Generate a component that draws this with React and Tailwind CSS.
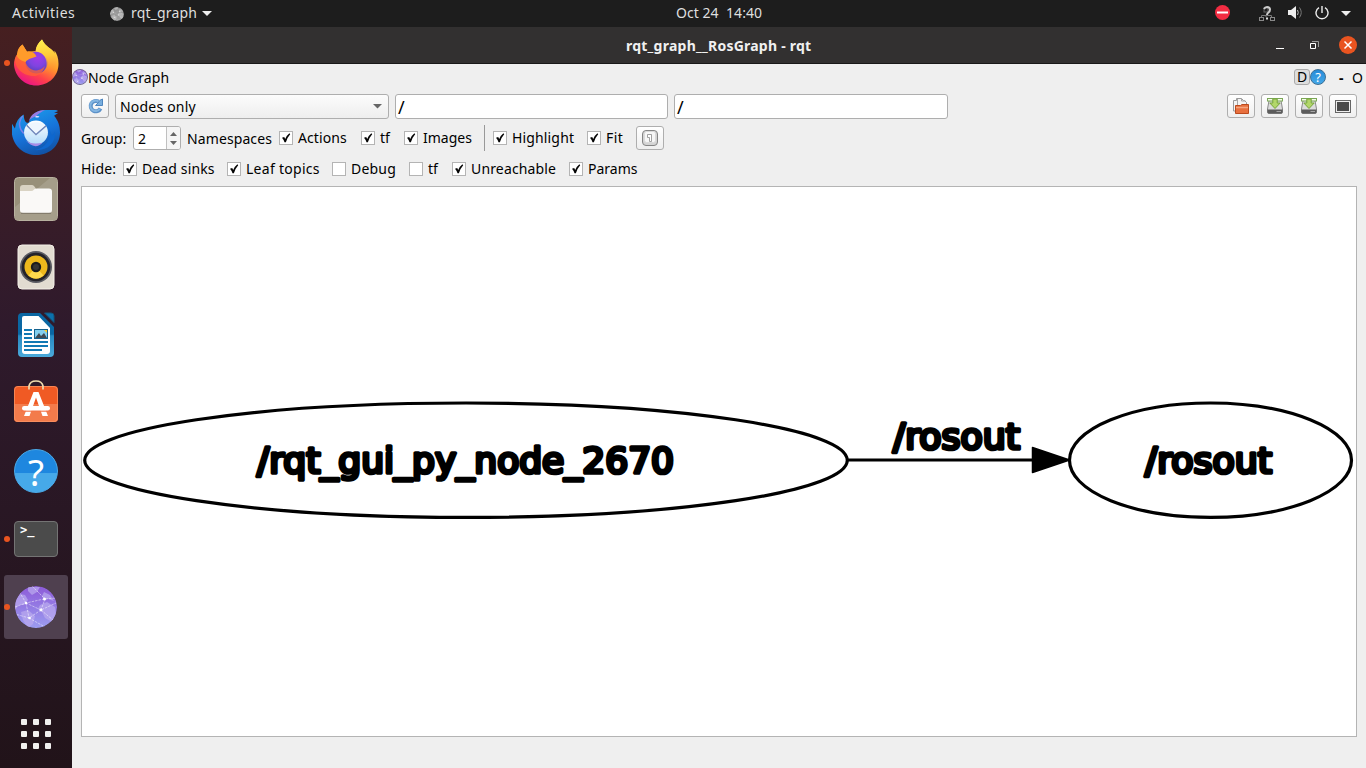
import React from "react";

function Label({ children, className = "" }) {
  return <span className={"block shrink-0 whitespace-pre leading-5 " + className}>{children}</span>;
}

function Check({ on = true, gap = "ml-[13px]" }) {
  return (
    <span className={"mr-[5px] flex h-3.5 w-3.5 shrink-0 items-center justify-center border border-[#b4b4b4] bg-white " + gap}>
      {on && (
        <svg width="12" height="12" viewBox="0 0 12 12">
          <path d="M2 5.8 4.2 5 5.2 7Q6.6 3.5 9.4 1.3L10.2 2.2Q7.2 5.5 5.9 10.2H4.5Q3.7 7.7 2 5.8Z" fill="#050505" />
        </svg>
      )}
    </span>
  );
}

function ToolButton({ children, className = "" }) {
  return (
    <span className={"flex h-6 w-7 shrink-0 items-center justify-center rounded-[3px] border border-[#aeaeae] bg-linear-to-b from-white to-[#efefef] " + className}>
      {children}
    </span>
  );
}

function Globe({ size, gray = false, rim = false }) {
  const id = "globe" + size;
  return (
    <svg width={size} height={size} viewBox="0 0 42 42">
      <defs>
        <linearGradient id={id} x1="0" y1="0" x2="0" y2="1">
          <stop offset="0" stopColor={gray ? "#8f8f8f" : "#8d5bd8"} />
          <stop offset="1" stopColor={gray ? "#a0a0a0" : "#9c9df0"} />
        </linearGradient>
        <clipPath id={id + "c"}><circle cx="21" cy="21" r="21" /></clipPath>
      </defs>
      <g clipPath={"url(#" + id + "c)"}>
        <circle cx="21" cy="21" r="21" fill={"url(#" + id + ")"} />
        <g fill={gray ? "#bdbdbd" : "#b9a8ee"} opacity="0.75">
          <path d="M0 15 5 8 10 9 13 14 9 19 4 19 0 24Z" />
          <path d="M13 1h12l-3 5-5 3-4-4Z" />
          <path d="M6 26l7-2 7 6-2 8-5 4-5-8Z" />
          <path d="M25 19l7-3 8 5 1 8-4 7-7-4-3-6-4-3Z" />
          <path d="M29 6l6 3 4 6-6-2-4 1-2-4Z" />
        </g>
        <path d="M0 21 11 17 29 13 41 12M11 17 26 24 41 17M26 24 14 32 0 28M14 32 30 41M17 0 30 13 26 24M11 17 14 32M11 17 5 7M26 24 38 34" stroke="white" strokeWidth="0.8" strokeDasharray="2.5 1" opacity="0.6" fill="none" />
        <g fill="white"><circle cx="11" cy="17" r="1.3" /><circle cx="29.5" cy="13" r="1.5" /><circle cx="26" cy="24" r="1.4" /><circle cx="14.5" cy="32" r="1.3" /></g>
        {rim && <circle cx="21" cy="21" r="20" fill="none" stroke="#777080" strokeWidth="2.5" />}
      </g>
    </svg>
  );
}

function Firefox() {
  return (
    <svg width="46" height="48" viewBox="0 0 46 48">
      <defs>
        <linearGradient id="ffb" x1="0.8" y1="0.1" x2="0.3" y2="1">
          <stop offset="0" stopColor="#ffe24a" /><stop offset="0.4" stopColor="#ff9a2a" /><stop offset="0.72" stopColor="#ff3f4b" /><stop offset="1" stopColor="#e8128a" />
        </linearGradient>
        <radialGradient id="ffp" cx="0.55" cy="0.3" r="0.75">
          <stop offset="0" stopColor="#a03bea" /><stop offset="0.5" stopColor="#8044e0" /><stop offset="1" stopColor="#4b3fb4" />
        </radialGradient>
        <linearGradient id="fff" x1="0" y1="0" x2="0.1" y2="1"><stop offset="0" stopColor="#fff44f" /><stop offset="0.5" stopColor="#ffc93a" /><stop offset="1" stopColor="#ff7a36" stopOpacity="0" /></linearGradient>
      </defs>
      <path d="M29 0.5C25 4 23 8 22.5 12L14 13 9.5 5.5C6 8 5 11 5 14 2 18 0.8 22 1 26 2 38 12 46.5 23 46.5 36 46.5 45.5 37 45.5 25 45.5 19 44 15 41.5 11.5V16C40 11 36 9 33 6 31 4 30 2 29 .5Z" fill="url(#ffb)" />
      <circle cx="23.5" cy="23.5" r="11" fill="url(#ffp)" />
      <path d="M29 0.5C25 4 22.5 9 23 12.500C29 13 33.500 18 33.500 24 33.500 31 29 35 23 36 33 38.500 42 33 43.500 24 44.500 17 42 13 38 10 33 7 30 4 29 .5Z" fill="url(#fff)" />
      <path d="M2 20Q3 16 5 14C6 18 9 20 12 21 13 27 17 31 23 31.500 28 31 30 29 32 27 30 34 25 37.500 19 37 9 36 2 29 2 20Z" fill="#ff6335" opacity="0.75" />
      <path d="M9.500 5.500 14 12.500C19 11.500 22 14 23.500 17.500 20 19 15 19.500 12.500 23 9 22 5 20 4 17 4 11 6 8 9.500 5.500Z" fill="#ff9b2b" />
    </svg>
  );
}

function Thunderbird() {
  return (
    <svg width="48" height="46" viewBox="0 1 49 47" preserveAspectRatio="none">
      <defs>
        <linearGradient id="tb" x1="0.2" y1="0" x2="0.6" y2="1"><stop offset="0" stopColor="#1c9ceb" /><stop offset="0.55" stopColor="#1672d9" /><stop offset="1" stopColor="#1152a5" /></linearGradient>
        <linearGradient id="tw" x1="0" y1="0" x2="0" y2="1"><stop offset="0" stopColor="#fff" /><stop offset="1" stopColor="#b3dcfa" /></linearGradient>
      </defs>
      <path d="M17 15C20 6 26 2 34 2h10q2 0 3 1l-4 2h4l-4 3c4 5 6 10 6 17 0 13-10 23-24 23C12 48 2 39 0 27V16l3 5Q4 11 12 6.500C12 12 14 16 17 15Z" fill="url(#tb)" />
      <path d="M17 14c2-8 9-12 17-12-7 3-8 6-13 8-2 1-3 2-4 4Z" fill="#977ce5" />
      <path d="M11 8C6 14 7 21 12 26" fill="none" stroke="#7a80e8" strokeWidth="1.500" />
      <circle cx="24.500" cy="25" r="12.200" fill="url(#tw)" />
      <path d="m15 17.500 9.500 9.500L35 18" fill="none" stroke="#7187bb" strokeWidth="1.600" />
      <path d="M16 17.500q8-6 18 0L24.500 26Z" fill="#eef6fe" />
      <path d="M14 33Q20 38 31 35.500 28 39 24 39 18 38 14 33Z" fill="#a78de6" />
      <path d="M38 22c2 11-4 19-15 21 13 1 22-7 21-19l-3 4Z" fill="#0e67ce" />
      <path d="m24 8 4 .3-1 1.500-3-.1Z" fill="#ddf" />
    </svg>
  );
}

function Files() {
  return (
    <svg width="44" height="44" viewBox="0 0 44 44">
      <rect x="0.5" y="0.5" width="43" height="43" rx="4" fill="#989079" stroke="#b8b2a0" />
      <path d="M1 30 36 1h4q3 0 3 3v36q0 3-3 3H4q-3 0-3-3Z" fill="#a59e8a" />
      <path d="M6 11q0-3 3-3h9q2 0 4 4l13 1v19H6Z" fill="#d9d3c3" />
      <path d="M6 14h11q2 0 3-1.500 1-1 3-1h12q3 0 3 3v18.500q0 3-3 3H9q-3 0-3-3Z" fill="#faf9f7" />
      <path d="M7 36.300h30" stroke="#7b7464" strokeWidth="1" />
    </svg>
  );
}

function Rhythmbox() {
  return (
    <svg width="38" height="46" viewBox="0 0 38 46">
      <rect x="1" y="1" width="36" height="44" rx="4" fill="#e2dcd1" stroke="#f4f0e8" />
      <circle cx="19" cy="23" r="16" fill="#5a5b62" /><circle cx="19" cy="23" r="14.300" fill="#242329" />
      <circle cx="19" cy="23" r="11.500" fill="#edb81c" /><path d="M11.500 31.500Q19 38 26.500 31.500L19 23Z" fill="#ffd94c" />
      <circle cx="19" cy="23" r="5.200" fill="#1b1b1c" /><circle cx="19" cy="23" r="3" fill="#343434" />
    </svg>
  );
}

function Writer() {
  return (
    <svg width="38" height="46" viewBox="0 0 38 46">
      <defs><linearGradient id="wr" x1="0" y1="0" x2="0" y2="1"><stop offset="0.48" stopColor="#0a67a3" /><stop offset="0.52" stopColor="#2789c1" /><stop offset="1" stopColor="#4baadb" /></linearGradient></defs>
      <path d="M5 1h18l14 14v26q0 4-4 4H5q-4 0-4-4V5q0-4 4-4Z" fill="url(#wr)" />
      <path d="M27.500 1H34q3 0 3 3v6.500Z" fill="#0b71ac" stroke="#12557c" />
      <path d="M7 4h14.500L33 16v23q0 3-3 3H8q-3 0-3-3V6q0-2 2-2Z" fill="#fff" />
      <path d="M7 18h8M7 22h8M7 26h8M7 30h24M7 34h24M7 38h18" stroke="#1279b4" strokeWidth="2" />
      <rect x="17.500" y="17.500" width="13" height="9" fill="#83cfee" stroke="#15618d" />
      <path d="m18 26 4-5 2 3 3-3 3 5Z" fill="#404952" /><path d="M27 18h3v3Z" fill="#ffca28" />
    </svg>
  );
}

function Software() {
  return (
    <svg width="46" height="46" viewBox="0 0 46 46">
      <rect x="1" y="8" width="44" height="36" rx="4" fill="#f05a24" />
      <path d="M1 26h44v14q0 4-4 4H5q-4 0-4-4Z" fill="#f37b4b" />
      <rect x="1.500" y="8.500" width="43" height="35" rx="3.500" fill="none" stroke="#f99768" strokeOpacity="0.7" />
      <path d="M16 11.500V8q1-5 7-5t7 5v3.500" fill="none" stroke="#efdcae" strokeWidth="1.700" />
      <path d="M20.500 14h5L35 38h-5.500L23 19.500 16.500 38H11Z" fill="white" />
      <path d="M8 33h30" stroke="#f37347" strokeWidth="1.500" />
      <rect x="9" y="28" width="28" height="4.500" rx="2.200" fill="white" />
    </svg>
  );
}

function HelpIcon({ size }) {
  return (
    <span className={size === 44
      ? "flex h-11 w-11 items-center justify-center rounded-full border border-[#4aaae9] bg-linear-to-b from-[#1e87df] from-54% to-[#46a9e9] to-56% font-['Noto_Sans',sans-serif] text-[37px] leading-none text-white"
      : "flex h-4 w-4 items-center justify-center rounded-full border border-[#3c6e94] bg-linear-to-b from-[#258bd9] to-[#45a8e7] font-['Noto_Sans',sans-serif] text-[13px] leading-none text-white"}>?</span>
  );
}

function DockItem({ children, running = false, active = false }) {
  return (
    <div className={"relative flex h-16 w-16 shrink-0 items-center justify-center rounded-[3px] " + (active ? "bg-[#4f404f]" : "")}>
      {running && <span className="absolute top-[29px] left-0 h-1.5 w-1.5 rounded-full bg-[#e95420]" />}
      {children}
    </div>
  );
}

function Dock() {
  return (
    <aside className="flex w-[72px] shrink-0 flex-col items-center gap-1 bg-linear-to-b from-[#461f20] via-[#2f1a2c] via-40% to-[#211319] pt-1">
      <DockItem running><Firefox /></DockItem>
      <DockItem><div className="mt-0.5"><Thunderbird /></div></DockItem>
      <DockItem><Files /></DockItem>
      <DockItem><Rhythmbox /></DockItem>
      <DockItem><Writer /></DockItem>
      <DockItem><div className="-mt-1"><Software /></div></DockItem>
      <DockItem><HelpIcon size={44} /></DockItem>
      <DockItem running>
        <span className="flex h-9 w-11 rounded-[4px] border border-[#747474] bg-[#4b4b4b] pt-0.5 pl-[5px] font-['DejaVu_Sans_Mono',monospace] text-[12px] leading-[12px] font-bold text-white">&gt;_</span>
      </DockItem>
      <DockItem running active><Globe size={42} /></DockItem>
      <div className="mt-auto mb-[19px] grid grid-cols-3 gap-1.5">
        {Array.from({ length: 9 }, (_, i) => <span key={i} className="h-1.5 w-1.5 rounded-[1px] bg-[#f1f0ef]" />)}
      </div>
    </aside>
  );
}

function TopBar() {
  return (
    <header className="flex h-[27px] shrink-0 items-center bg-[#1d1d1d] text-[14px] text-[#dfdfdf]">
      <Label className="-mt-px ml-3 w-[98px] tracking-[0.5px]">Activities</Label>
      <Globe size={14} gray />
      <Label className="-mt-px ml-[7px] w-[70px] tracking-[0.15px]">rqt_graph</Label>
      <svg width="10" height="6" className="ml-px"><path d="M0 0h10L5 5Z" fill="#eee" /></svg>
      <Label className="-mt-px ml-[464px] w-[540px] tracking-[0.05px]">{"Oct 24  14:40"}</Label>
      <svg width="15" height="15" viewBox="0 0 15 15" className="-mt-0.5 -ml-px"><circle cx="7.5" cy="7.5" r="7.5" fill="#f22c42" /><path d="M2 7.5h11" stroke="white" strokeWidth="2" /></svg>
      <svg width="18" height="16" viewBox="0 0 18 16" className="ml-7" fill="none">
        <path d="M8 9v2M3.5 11V9.5h10V11" stroke="#777" /><rect x="1.5" y="11.5" width="4" height="3" stroke="#888" /><rect x="12.5" y="11.5" width="4" height="3" stroke="#888" />
        <rect x="6" y="2" width="4" height="4" stroke="#666" />
        <path d="M6 3q1-2 3-2 3 0 3 2.5Q12 5.5 10.5 6.5 9 7.5 9 9" stroke="#ccc" strokeWidth="2" /><rect x="8" y="11.5" width="2" height="2" fill="#ddd" />
      </svg>
      <svg width="16" height="16" viewBox="0 0 16 16" className="-mt-px ml-[11px]" fill="none">
        <path d="M1 5h3l5-4v13l-5-4H1Z" fill="#eee" /><path d="M10.5 5q1.5 2.5 0 5" stroke="#bbb" /><path d="M12.5 2.5q3.5 5 0 10" stroke="#777" />
      </svg>
      <svg width="14" height="14" viewBox="0 0 14 14" className="-mt-0.5 ml-3" fill="none" stroke="#eee" strokeWidth="1.4"><path d="M7 0v7M4 1.6a6 6 0 1 0 6 0" /></svg>
      <svg width="10" height="6" className="ml-3"><path d="M0 0h10L5 5Z" fill="#eee" /></svg>
    </header>
  );
}

function TitleBar() {
  return (
    <div className="flex h-[37px] shrink-0 items-center border-b border-[#191818] bg-[#323030] text-[14px] font-bold text-[#f0f0f0]">
      <Label className="mt-0.5 ml-[554px] w-[648px] tracking-[0.24px]">rqt_graph__RosGraph - rqt</Label>
      <svg width="9" height="10" className="ml-[2px]"><path d="M0 8.5h8" stroke="white" /></svg>
      <svg width="9" height="9" viewBox="0 0 9 9" className="ml-[25px]" fill="none"><path d="M2 .5h6.5V6" stroke="#999" /><path d="M.5 2.5h5v5h-5Z" stroke="white" /></svg>
      <svg width="18" height="18" viewBox="0 0 18 18" className="ml-5"><circle cx="9" cy="9" r="9" fill="#e95420" /><path d="m5.5 5.500 7 7m0-7-7 7" stroke="white" strokeWidth="1.5" /></svg>
    </div>
  );
}

function SaveIcon() {
  return (
    <svg width="16" height="16" viewBox="0 0 16 16">
      <path d="M2 2.500h12L15.500 11v3q0 1.500-1.500 1.500H2Q.5 15.500.5 14v-3Z" fill="#dcdcdc" stroke="#8a8a8a" />
      <path d="M.5 11.500h15V14q0 1.500-1.500 1.500H2Q.5 15.500.5 14Z" fill="#5c5c5c" /><path d="M9.500 13.500H14" stroke="#a5a5a5" />
      <rect x=".5" y=".5" width="15" height="2.500" fill="#f5fbe9" stroke="#7ba757" />
      <path d="M5.800 1h4.400v4h3L8 10.500 2.800 5h3Z" fill="#b2d76a" stroke="#76a53b" />
    </svg>
  );
}

function Toolbar() {
  return (
    <div className="flex h-[25px] items-start pr-[9px] pl-[9px]">
      <ToolButton>
        <svg width="17" height="16" viewBox="0 0 17 16" fill="none"><path d="M13.500 10.500A5.200 5.200 0 1 1 11.500 3.600" stroke="#5b91c8" strokeWidth="4" /><path d="M12.800 10.700A5.200 5.200 0 1 1 11.500 3.600" stroke="#83b5e1" strokeWidth="2" /><path d="M15.500 1v6.500H8.500L11 5l2-2.800Z" fill="#78aede" stroke="#4f86bf" /></svg>
      </ToolButton>
      <div className="ml-1.5 flex h-[25px] w-[274px] items-center justify-between rounded-[3px] border border-[#aeaeae] bg-linear-to-b from-[#fcfcfc] to-[#eeeeee] pr-1.5 pl-1">
        <Label className="tracking-[0.2px]">Nodes only</Label>
        <svg width="9" height="5"><path d="M0 0h9L4.500 4.500Z" fill="#666" /></svg>
      </div>
      <div className="ml-1.5 flex h-[25px] w-[273px] items-center rounded-[3px] border border-[#aeaeae] bg-white pl-0.5"><Label className="text-[18px]">/</Label></div>
      <div className="ml-1.5 flex h-[25px] w-[274px] items-center rounded-[3px] border border-[#aeaeae] bg-white pl-0.5"><Label className="text-[18px]">/</Label></div>
      <div className="ml-auto flex gap-1.5">
        <ToolButton>
          <svg width="16" height="16" viewBox="0 0 16 16">
            <path d="M.5 13V2.500h3v-2h5l2 2h1l2 2V13Z" fill="#f4f4f4" stroke="#9a9a9a" />
            <path d="M4.500 10V1M8.500.5V3h4" fill="none" stroke="#a8a8a8" />
            <path d="M2.500 15.500V7.500h5l1.500-1h6.500v9Z" fill="#e8703e" stroke="#bb4a1e" />
            <path d="M3 9.500h12" stroke="#f6a57f" strokeWidth="1.500" />
          </svg>
        </ToolButton>
        <ToolButton><SaveIcon /></ToolButton>
        <ToolButton><SaveIcon /></ToolButton>
        <ToolButton><svg width="16" height="13"><rect x=".5" y=".5" width="15" height="12" fill="#eee" stroke="#666" /><rect x="2" y="2" width="12" height="9" fill="#4b4b4b" /></svg></ToolButton>
      </div>
    </div>
  );
}

function Graph() {
  return (
    <svg width="1274" height="549" viewBox="82 187 1274 549" className="block">
      <g fill="none" stroke="black" strokeWidth="3.2">
        <ellipse cx="466" cy="460.2" rx="381.3" ry="57.2" />
        <ellipse cx="1210.500" cy="460.2" rx="141" ry="57.2" />
        <path d="M848 460h186" />
      </g>
      <path d="M1032.500 447.500v25l37-12.500Z" stroke="black" strokeWidth="1.500" strokeLinejoin="round" />
      <g fontFamily="DejaVu Sans, sans-serif" fontSize="35.500" stroke="black" strokeWidth="3.700" strokeLinejoin="round">
        <text x="257" y="473.300" textLength="417" lengthAdjust="spacingAndGlyphs">/rqt_gui_py_node_2670</text>
        <text x="893" y="448.600" textLength="127" lengthAdjust="spacingAndGlyphs">/rosout</text>
        <text x="1145" y="473.300" textLength="127" lengthAdjust="spacingAndGlyphs">/rosout</text>
      </g>
    </svg>
  );
}

export default function App() {
  return (
    <div className="flex h-[768px] w-[1366px] flex-col overflow-hidden font-['Noto_Sans',sans-serif]">
      <TopBar />
      <div className="flex min-h-0 flex-1">
        <Dock />
        <main className="flex w-[1294px] flex-col bg-[#efefef] text-[14px] text-black">
          <TitleBar />
          <div className="flex h-[30px] shrink-0 items-start pt-[5px]">
            <Globe size={16} rim />
            <Label className="-mt-px tracking-[0.12px]">Node Graph</Label>
            <span className="ml-auto flex h-4 w-4 items-center justify-center rounded-[3px] border border-[#aaa] bg-[#dedede] leading-none">D</span>
            <HelpIcon size={16} />
            <Label className="-mt-px ml-[13px] w-[13px] font-bold">-</Label>
            <Label className="-mt-px w-[14px]">O</Label>
          </div>
          <Toolbar />
          <div className="flex h-[38px] shrink-0 items-center pl-[9px]">
            <Label className="mt-0.5 w-[52px]">Group:</Label>
            <div className="flex h-6 w-12 overflow-hidden rounded-[3px] border border-[#aeaeae] bg-white">
              <Label className="w-[33px] border-r border-[#c0c0c0] pt-0.5 pl-1">2</Label>
              <span className="flex flex-1 flex-col items-center justify-center gap-[5px] bg-[#f5f5f5]">
                <svg width="7" height="4"><path d="M0 4h7L3.500 0Z" fill="#666" /></svg>
                <svg width="7" height="4"><path d="M0 0h7L3.500 4Z" fill="#666" /></svg>
              </span>
            </div>
            <Label className="mt-0.5 ml-1.5 w-[86px] tracking-[0.1px]">Namespaces</Label>
            <Check gap="-mt-px ml-1.5" /><Label className="w-[50px] tracking-[0.1px]">Actions</Label>
            <Check gap="-mt-px ml-[13px]" /><Label className="w-3">tf</Label>
            <Check gap="-mt-px ml-3" /><Label className="w-[49px]">Images</Label>
            <span className="ml-3 h-[26px] w-px bg-[#999]" />
            <Check gap="-mt-px ml-2" /><Label className="w-[62px] tracking-[0.15px]">Highlight</Label>
            <Check gap="-mt-px ml-[13px]" /><Label className="w-[18px] tracking-[0.4px]">Fit</Label>
            <ToolButton className="ml-3">
              <svg width="16" height="16" viewBox="0 0 16 16" fill="none" stroke="#777"><rect x=".5" y=".5" width="15" height="15" rx="3.500" fill="#d4d4d4" stroke="#858585" /><rect x="2.500" y="1.500" width="11" height="11" rx="2" fill="#f7f7f7" stroke="#dadada" /><path d="M5.500 4.500h4v7h-2v-4h-2Z" fill="white" stroke="#8b8b8b" strokeWidth=".8" /></svg>
            </ToolButton>
          </div>
          <div className="flex h-[29px] shrink-0 items-start pt-1 pl-[9px]">
            <div className="flex h-4 items-center">
              <Label className="w-9 tracking-[0.2px]">Hide:</Label>
              <Check gap="ml-1.5" /><Label className="w-[73px] tracking-[0.12px]">Dead sinks</Label>
              <Check gap="ml-3" /><Label className="w-[74px] tracking-[0.28px]">Leaf topics</Label>
              <Check on={false} gap="ml-3" /><Label className="w-[45px] tracking-[0.2px]">Debug</Label>
              <Check on={false} gap="ml-[13px]" /><Label className="w-3">tf</Label>
              <Check gap="ml-3" /><Label className="w-[85px] tracking-[0.15px]">Unreachable</Label>
              <Check gap="ml-[13px]" /><Label className="w-[50px]">Params</Label>
            </div>
          </div>
          <section className="mr-[9px] ml-[9px] h-[551px] shrink-0 border border-[#b4b4b4] bg-white">
            <Graph />
          </section>
        </main>
      </div>
    </div>
  );
}
